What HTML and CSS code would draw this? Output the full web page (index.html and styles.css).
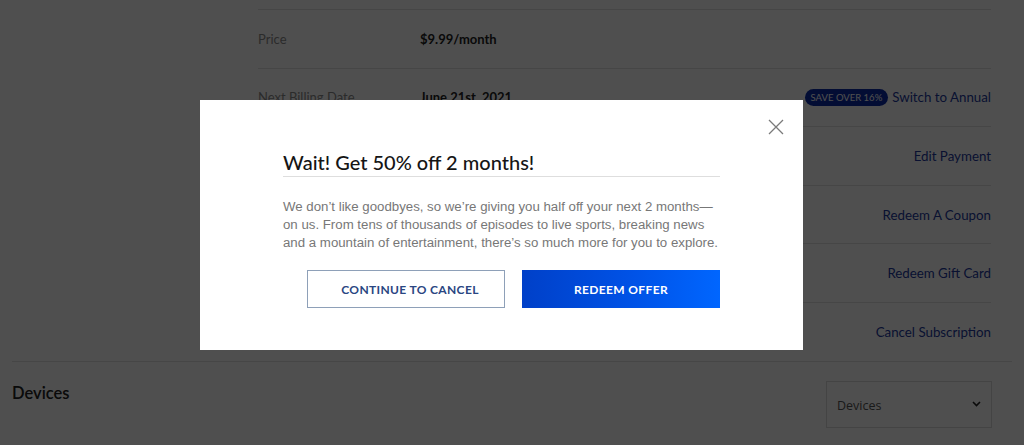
FILE: index.html
```html
<!DOCTYPE html>
<html lang="en">
<head>
<meta charset="utf-8">
<title>Account</title>
<link rel="stylesheet" href="styles.css">
</head>
<body>
<main class="page">
  <section class="plan">
    <div class="plan-side"></div>
    <div class="plan-rows">
      <div class="row">
        <span class="label">Price</span>
        <span class="value">$9.99/month</span>
      </div>
      <div class="row">
        <span class="label">Next Billing Date</span>
        <span class="value">June 21st, 2021</span>
        <span class="action"><span class="badge">SAVE OVER 16%</span><a class="link" href="#">Switch to Annual</a></span>
      </div>
      <div class="row">
        <span class="action"><a class="link" href="#">Edit Payment</a></span>
      </div>
      <div class="row">
        <span class="action"><a class="link" href="#">Redeem A Coupon</a></span>
      </div>
      <div class="row">
        <span class="action"><a class="link" href="#">Redeem Gift Card</a></span>
      </div>
      <div class="row">
        <span class="action"><a class="link" href="#">Cancel Subscription</a></span>
      </div>
    </div>
  </section>
  <section class="devices">
    <h2 class="devices-title">Devices</h2>
    <div class="select">
      <span>Devices</span>
      <svg class="chev" width="9" height="6" viewBox="0 0 9 6"><path d="M1 1l3.5 3.5L8 1" fill="none" stroke="#222" stroke-width="1.6"/></svg>
    </div>
  </section>
</main>

<div class="overlay">
  <div class="modal" role="dialog">
    <button class="close" aria-label="Close">
      <svg width="16" height="16" viewBox="0 0 16 16"><path d="M1 1L15 15M15 1L1 15" stroke="#7a7a7a" stroke-width="1.3" fill="none"/></svg>
    </button>
    <h1 class="modal-title">Wait! Get 50% off 2 months!</h1>
    <p class="modal-text">We don’t like goodbyes, so we’re giving you half off your next 2 months—on us. From tens of thousands of episodes to live sports, breaking news and a mountain of entertainment, there’s so much more for you to explore.</p>
    <div class="modal-actions">
      <button class="btn btn-outline">CONTINUE TO CANCEL</button>
      <button class="btn btn-primary">REDEEM OFFER</button>
    </div>
  </div>
</div>
</body>
</html>
```

FILE: styles.css
```css
* { box-sizing: border-box; }
html, body { margin: 0; padding: 0; }
body {
  background: #ffffff;
  font-family: "Lato", "Open Sans", sans-serif;
  color: #222;
  width: 1024px;
  height: 445px;
  overflow: hidden;
}
.page {
  padding: 9px 12px 0 12px;
}
.plan {
  display: flex;
  border-bottom: 1px solid #e3e3e3;
  padding-right: 21px;
}
.plan-side { width: 246px; flex: none; }
.plan-rows { flex: 1; }
.row {
  height: 58.6px;
  border-top: 1px solid #e3e3e3;
  display: flex;
  align-items: center;
  font-size: 13px;
}
.label {
  width: 162px;
  color: #8c8c8c;
}
.value {
  font-weight: 700;
  color: #222;
}
.action {
  margin-left: auto;
  display: flex;
  align-items: center;
  gap: 4px;
}
.link {
  color: #22399e;
  text-decoration: none;
  font-size: 13.3px;
}
.badge {
  background: #0a2aa8;
  color: #fff;
  font-size: 9.5px;
  border-radius: 9px;
  padding: 3px 6px 2px;
  line-height: 12px;
}
.devices {
  display: flex;
  justify-content: space-between;
  align-items: flex-start;
  padding: 19px 20px 0 0;
}
.devices-title {
  margin: 0;
  font-size: 16.5px;
  line-height: 24px;
  font-weight: 600;
  color: #222;
}
.select {
  width: 166px;
  height: 47px;
  border: 1px solid #dadada;
  display: flex;
  align-items: center;
  justify-content: space-between;
  padding: 3px 10px 0 10px;
  font-family: "Open Sans", sans-serif;
  font-size: 12.5px;
  color: #555;
}
.chev { margin-top: -3px; }

.overlay {
  position: fixed;
  inset: 0;
  background: rgba(0, 0, 0, 0.69);
  padding: 100px 0 0 200px;
}
.modal {
  position: relative;
  width: 603px;
  height: 250px;
  background: #fff;
  padding: 50px 83px 0 83px;
}
.close {
  position: absolute;
  top: 19px;
  right: 19px;
  width: 16px;
  height: 16px;
  padding: 0;
  border: 0;
  background: none;
  display: block;
}
.close svg { display: block; }
.modal-title {
  margin: 0;
  font-size: 20px;
  line-height: 24px;
  font-weight: 500;
  color: #151515;
  padding-bottom: 2px;
  border-bottom: 1px solid #dedede;
}
.modal-text {
  margin: 21px 0 0 0;
  font-family: "Liberation Sans", Arial, sans-serif;
  font-size: 13.25px;
  line-height: 18px;
  color: #777;
}
.modal-actions {
  margin-top: 18px;
  display: flex;
  justify-content: flex-end;
  gap: 17px;
}
.btn {
  width: 198px;
  height: 38px;
  font-family: "Lato", sans-serif;
  font-size: 12px;
  font-weight: 700;
  letter-spacing: 0.35px;
  cursor: pointer;
}
.btn-outline {
  background: #fff;
  border: 1px solid #8ea0b8;
  color: #2a4682;
  padding-left: 14px;
}
.btn-primary {
  border: 0;
  color: #fff;
  background: linear-gradient(90deg, #0040c8 0%, #0052e6 55%, #0066ff 100%);
}
```
